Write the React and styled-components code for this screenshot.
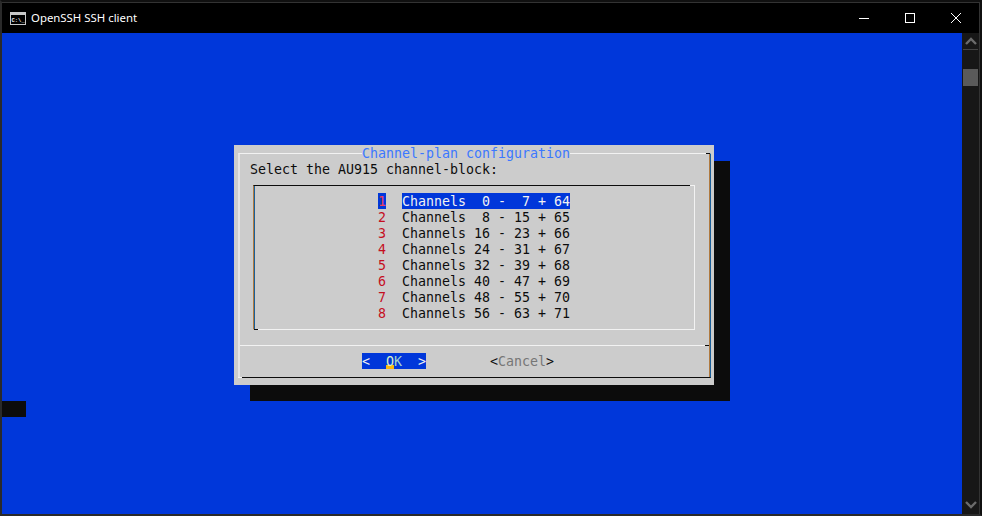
import React from 'react'
import styled, { createGlobalStyle } from 'styled-components'

const channels = [
  'Channels  0 -  7 + 64',
  'Channels  8 - 15 + 65',
  'Channels 16 - 23 + 66',
  'Channels 24 - 31 + 67',
  'Channels 32 - 39 + 68',
  'Channels 40 - 47 + 69',
  'Channels 48 - 55 + 70',
  'Channels 56 - 63 + 71',
]

const App = () => {
  return (
    <>
      <GlobalStyle />
      <Window>
        <TitleBar>
          <TitleLeft>
            <svg width="16" height="13" viewBox="0 0 16 13">
              <rect x="0.5" y="0.5" width="15" height="12" fill="#000" stroke="#c8c8c8" />
              <rect x="1" y="1" width="14" height="2" fill="#c8c8c8" />
              <text x="1.5" y="10" fontSize="5.5" fontFamily="Liberation Mono, monospace" fontWeight="700" fill="#f0f0f0">C:\_</text>
            </svg>
            <AppName>OpenSSH SSH client</AppName>
          </TitleLeft>
          <Controls>
            <ControlButton>
              <svg width="10" height="10" viewBox="0 0 10 10">
                <path d="M0 5.5h10" stroke="#fff" fill="none" />
              </svg>
            </ControlButton>
            <ControlButton>
              <svg width="10" height="10" viewBox="0 0 10 10">
                <rect x="0.5" y="0.5" width="9" height="9" stroke="#fff" fill="none" />
              </svg>
            </ControlButton>
            <ControlButton>
              <svg width="10" height="10" viewBox="0 0 10 10">
                <path d="M0 0l10 10M10 0L0 10" stroke="#fff" fill="none" />
              </svg>
            </ControlButton>
          </Controls>
        </TitleBar>
        <Body>
          <Screen>
            <Dialog>
              <Frame>
                <Title>Channel-plan configuration</Title>
                <Prompt>Select the AU915 channel-block:</Prompt>
                <ListBox>
                  {channels.map((label, i) => (
                    <Row key={label}>
                      <Num $active={i === 0}>{i + 1}</Num>
                      <Item $active={i === 0}>{label}</Item>
                    </Row>
                  ))}
                </ListBox>
                <Divider />
                <Buttons>
                  <OkButton>
                    {'<  '}
                    <HotKey>O</HotKey>
                    <OkK>K</OkK>
                    {'  >'}
                  </OkButton>
                  <CancelButton>
                    {'<'}
                    <span>Cancel</span>
                    {'>'}
                  </CancelButton>
                </Buttons>
              </Frame>
            </Dialog>
            <Cursor />
          </Screen>
          <ScrollBar>
            <ScrollArrow $up>
              <svg width="12" height="8" viewBox="0 0 12 8">
                <path d="M1 7l5-5 5 5" stroke="#6b6b6b" strokeWidth="2.4" fill="none" />
              </svg>
            </ScrollArrow>
            <Thumb />
            <ScrollArrow>
              <svg width="12" height="8" viewBox="0 0 12 8">
                <path d="M1 1l5 5 5-5" stroke="#6b6b6b" strokeWidth="2.4" fill="none" />
              </svg>
            </ScrollArrow>
          </ScrollBar>
        </Body>
      </Window>
    </>
  )
}

const GlobalStyle = createGlobalStyle`
  html, body {
    margin: 0;
    padding: 0;
    background: #000;
  }
  * {
    box-sizing: border-box;
  }
`

const Window = styled.div`
  width: 982px;
  height: 516px;
  display: flex;
  flex-direction: column;
  background: #000;
  border-style: solid;
  border-width: 2px;
  border-color: #101010 #101010 #2a2a2a #2a2a2a;
  overflow: hidden;
`

const TitleBar = styled.header`
  height: 31px;
  display: flex;
  align-items: center;
  justify-content: space-between;
  padding-left: 8px;
  border-top: 1px solid #333;
  border-right: 1px solid #333;
`

const TitleLeft = styled.div`
  display: flex;
  align-items: center;
  gap: 5px;
`

const AppName = styled.span`
  padding-bottom: 2px;
  color: #fff;
  font-family: 'Noto Sans', sans-serif;
  font-size: 11.4px;
`

const Controls = styled.div`
  display: flex;
  height: 100%;
`

const ControlButton = styled.div`
  width: 46px;
  display: flex;
  align-items: center;
  justify-content: center;
`

const Body = styled.main`
  flex: 1;
  display: flex;
  min-height: 0;
`

// every text cell is 16px high, the taller line-height drops the glyphs 1px in the cell
const Screen = styled.section`
  flex: 1;
  background: #0037da;
  padding-top: 112px;
  font-family: 'DejaVu Sans Mono', monospace;
  font-size: 13.29px;
  line-height: 18px;
  color: #0c0c0c;
  white-space: pre;
`

const Dialog = styled.div`
  width: 480px;
  height: 240px;
  margin-left: 232px;
  padding: 8px 3px 7px 4px;
  background: #cccccc;
  box-shadow: 16px 16px 0 #0c0c0c;
`

const Frame = styled.div`
  position: relative;
  height: 225px;
  border-top: 1px solid #f2f2f2;
  border-left: 2px solid #e4e4e4;
  border-bottom: 1px solid #0c0c0c;
  border-right: 1px solid #1a5f9a;
  box-shadow: inset -1px 0 0 #b07a40;

  &::before {
    content: '';
    position: absolute;
    top: -1px;
    right: 0;
    width: 4px;
    height: 1px;
    background: #0c0c0c;
  }
  &::after {
    content: '';
    position: absolute;
    bottom: -1px;
    left: -2px;
    width: 4px;
    height: 1px;
    background: #f2f2f2;
  }
`

const Title = styled.div`
  position: absolute;
  top: -9px;
  left: 122px;
  height: 16px;
  background: #cccccc;
  color: #3b78ff;
`

const Prompt = styled.div`
  height: 16px;
  margin: 7px 0 8px 10px;
`

const ListBox = styled.div`
  position: relative;
  width: 442px;
  height: 145px;
  margin-left: 13px;
  padding: 7px 0 0 124px;
  border-top: 1px solid #0c0c0c;
  border-left: 1px solid #b07a40;
  border-right: 1px solid #f2f2f2;
  border-bottom: 1px solid #f2f2f2;
  box-shadow: inset 1px 0 0 #1a5f9a;

  &::before {
    content: '';
    position: absolute;
    top: -1px;
    right: -1px;
    width: 5px;
    height: 1px;
    background: #f2f2f2;
  }
  &::after {
    content: '';
    position: absolute;
    bottom: -1px;
    left: 0;
    width: 4px;
    height: 1px;
    background: #0c0c0c;
  }
`

const Row = styled.div`
  display: flex;
  gap: 16px;
  height: 16px;
`

const Num = styled.span`
  width: 8px;
  height: 16px;
  color: ${(p) => (p.$active ? '#f0405a' : '#c50f1f')};
  background: ${(p) => (p.$active ? '#0037da' : 'transparent')};
`

const Item = styled.span`
  height: 16px;
  color: ${(p) => (p.$active ? '#f2f2f2' : '#0c0c0c')};
  background: ${(p) => (p.$active ? '#0037da' : 'transparent')};
`

const Divider = styled.div`
  position: relative;
  height: 1px;
  margin-top: 15px;
  margin-right: 1px;
  background: #f2f2f2;

  &::after {
    content: '';
    position: absolute;
    top: 0;
    right: 0;
    width: 4px;
    height: 1px;
    background: #0c0c0c;
  }
`

const Buttons = styled.div`
  display: flex;
  gap: 64px;
  height: 16px;
  margin-top: 7px;
  padding-left: 122px;
`

const OkButton = styled.span`
  width: 64px;
  height: 16px;
  background: #0037da;
  color: #f2f2f2;
`

const HotKey = styled.span`
  display: inline-block;
  width: 8px;
  height: 16px;
  vertical-align: top;
  color: #d8efc8;
  background: linear-gradient(#0037da 12px, #f9b90f 12px);
`

const OkK = styled.span`
  color: #a8d8c8;
`

const CancelButton = styled.span`
  height: 16px;
  color: #0c0c0c;

  span {
    color: #767676;
  }
`

const Cursor = styled.div`
  width: 24px;
  height: 16px;
  margin-top: 16px;
  background: #0c0c0c;
`

const ScrollBar = styled.aside`
  width: 18px;
  display: flex;
  flex-direction: column;
  background: #171717;
  border-right: 1px solid #333;
  padding: 0 0 0 1px;
`

const ScrollArrow = styled.div`
  height: 16px;
  width: 15px;
  display: flex;
  justify-content: center;
  align-items: center;
  box-sizing: content-box;
  ${(p) => (p.$up ? 'border-bottom: 1px solid #444; padding-bottom: 0;' : 'margin-top: auto; padding-bottom: 1px;')}
`

const Thumb = styled.div`
  width: 15px;
  height: 17px;
  margin-top: 19px;
  background: #5a5a5a;
`

export default App
